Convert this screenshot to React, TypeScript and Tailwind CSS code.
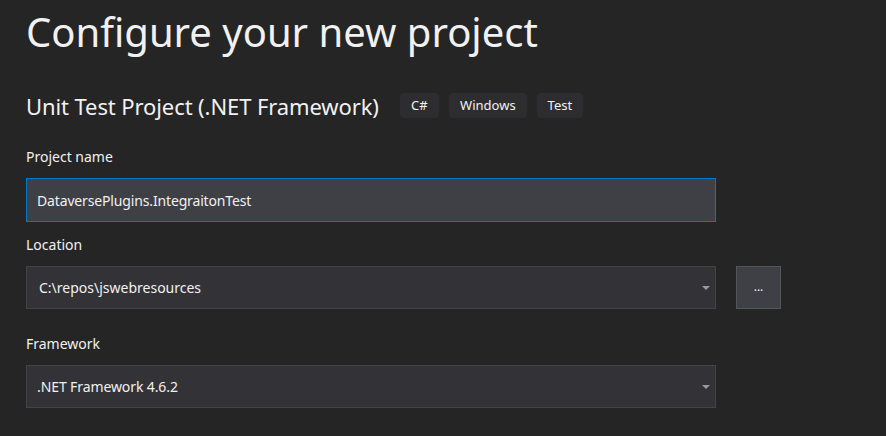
import React from "react";

const font = { fontFamily: '"Noto Sans", "Open Sans", sans-serif' };

function Arrow() {
  return (
    <svg width="8" height="4" viewBox="0 0 8 4" className="absolute right-[5px] top-1/2 -translate-y-1/2">
      <path d="M0 0 H8 L4 4 Z" fill="#999999" />
    </svg>
  );
}

export default function App() {
  return (
    <div className="w-[886px] h-[436px] bg-[#252526] text-[#f1f1f1] overflow-hidden pl-[26px]" style={font}>
      <h1 className="text-[40px] leading-[48px] pt-[8px]">Configure your new project</h1>
      <div className="flex items-center mt-[37px] h-[25px]">
        <span className="text-[22px] leading-[28px] tracking-[-0.1px]">Unit Test Project (.NET Framework)</span>
        <div className="flex gap-[10px] ml-[21px] text-[13px]">
          <span className="bg-[#2d2d30] rounded-[4px] h-[25px] w-[39px] flex items-center justify-center">C#</span>
          <span className="bg-[#2d2d30] rounded-[4px] h-[25px] w-[78px] flex items-center justify-center">Windows</span>
          <span className="bg-[#2d2d30] rounded-[4px] h-[25px] w-[46px] flex items-center justify-center">Test</span>
        </div>
      </div>
      <div className="text-[14px] leading-[20px] mt-[29px]">Project name</div>
      <div className="mt-[11px] w-[690px] h-[44px] bg-[#3f3f46] border border-[#007acc] flex items-center px-[10px] text-[14px] tracking-[-0.15px]">
        DataversePlugins.IntegraitonTest
      </div>
      <div className="text-[14px] leading-[20px] mt-[13px]">Location</div>
      <div className="mt-[11px] flex gap-[20px]">
        <div className="relative w-[690px] h-[43px] bg-[#333337] border border-[#434346] flex items-center pl-[12px] pr-[10px] text-[14px]">
          C:\repos\jswebresources
          <Arrow />
        </div>
        <div className="w-[45px] h-[43px] bg-[#3f3f46] border border-[#555558] flex items-center justify-center text-[12px] pb-[2px]">
          ...
        </div>
      </div>
      <div className="text-[14px] leading-[20px] mt-[25px]">Framework</div>
      <div className="mt-[11px] relative w-[690px] h-[43px] bg-[#333337] border border-[#434346] flex items-center px-[10px] text-[14px] tracking-[-0.1px]">
        .NET Framework 4.6.2
        <Arrow />
      </div>
    </div>
  );
}
